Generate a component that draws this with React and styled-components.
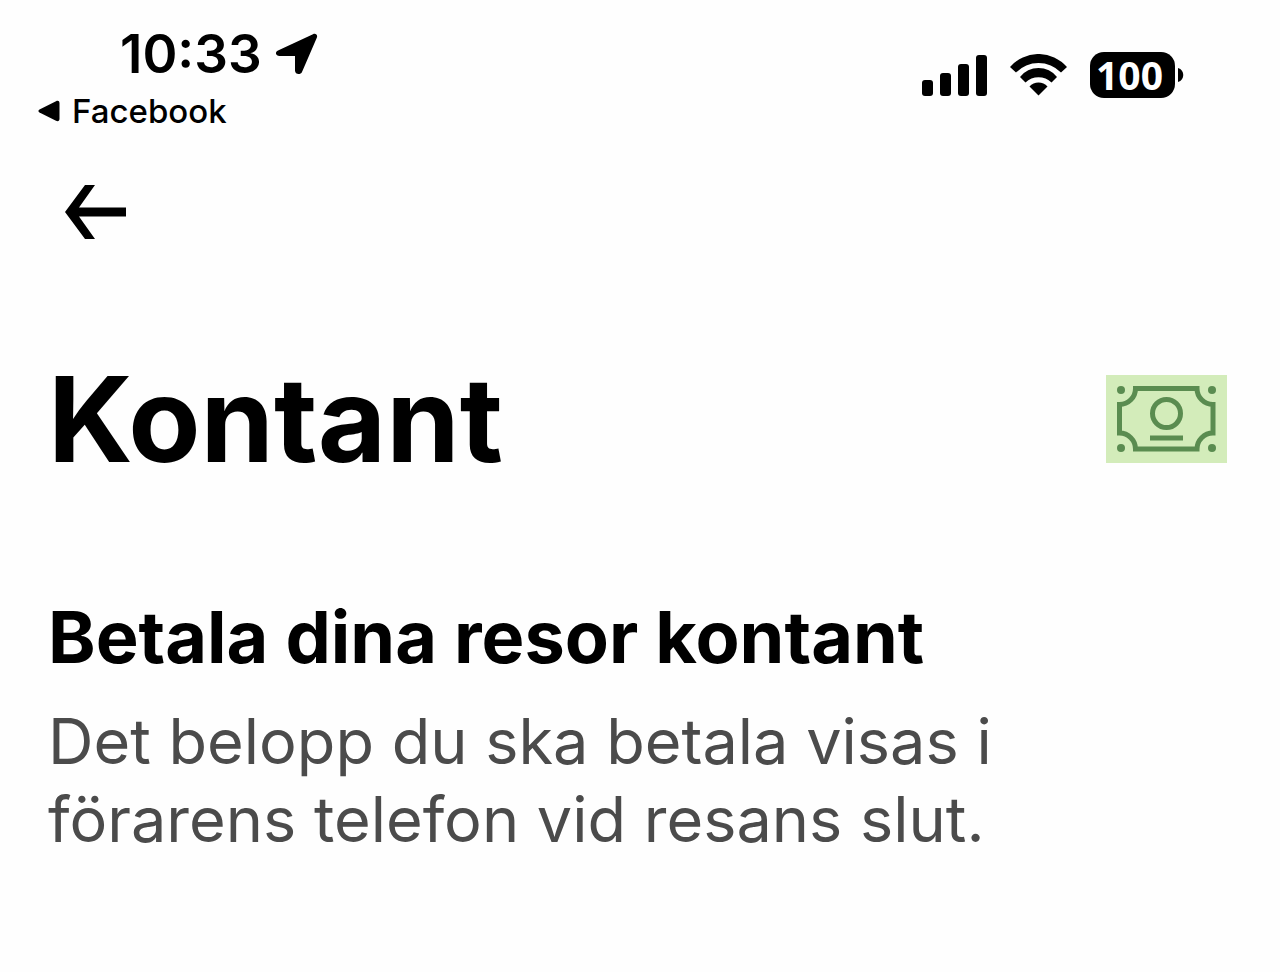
import React from "react";
import styled, { createGlobalStyle } from "styled-components";

const GlobalStyle = createGlobalStyle`
    * {
        box-sizing: border-box;
    }
    body {
        margin: 0;
        background-color: #fefefe;
        color: #000;
        font-family: Inter, sans-serif;
    }
`
const Screen = styled.div`
    padding: 28px 53px 120px 48px;
`
const StatusBar = styled.header`
    display: flex;
    justify-content: space-between;
    align-items: flex-start;
    margin: 0 -16px 0 -10px;
`
const Clock = styled.div`
    display: flex;
    align-items: center;
    gap: 14px;
    padding-left: 82px;
    font-size: 53px;
    font-weight: 600;
    line-height: 52px;
`
const BackToApp = styled.a`
    display: flex;
    align-items: center;
    gap: 12px;
    margin-top: 11px;
    color: inherit;
    font-size: 33px;
    font-weight: 500;
    line-height: 40px;
    text-decoration: none;
`
const Indicators = styled.div`
    display: flex;
    align-items: center;
    gap: 22px;
    padding: 24px 59px 0 0;
`
const Battery = styled.div`
    display: flex;
    align-items: center;
    gap: 3px;
`
const BatteryLevel = styled.span`
    width: 85px;
    border-radius: 14px;
    background-color: #000;
    color: #fff;
    font-family: "Open Sans", sans-serif;
    font-size: 39px;
    font-weight: 700;
    line-height: 46px;
    text-align: center;
    padding-right: 6px;
`
const BackButton = styled.button`
    display: block;
    margin: 54px 0 0;
    padding: 0 17px;
    border: 0;
    background: none;
    cursor: pointer;
`
const Icon = styled.svg`
    display: block;
    flex: none;
`
const TitleRow = styled.div`
    display: flex;
    justify-content: space-between;
    align-items: center;
    margin-top: 108px;
`
const Title = styled.h1`
    margin: 0;
    font-size: 118px;
    font-weight: 700;
    line-height: 144px;
`
const Subtitle = styled.h2`
    margin: 98px 0 0;
    font-size: 72px;
    font-weight: 700;
    line-height: 96px;
`
const Description = styled.p`
    max-width: 1000px;
    margin: 17px 0 0;
    color: #4b4b4b;
    font-size: 63px;
    line-height: 78px;
`

const LocationIcon = () => (
    <Icon width="42" height="42" viewBox="0 0 42 42" aria-hidden="true">
        <path d="M2 17.5 37 1.2c2.700-1.200 5 .8 3.800 3.500L26 39c-1.500 3.300-7 2.600-7-1.500V23H3.500c-4 0-4.800-4-1.500-5.500Z" />
    </Icon>
)

const CaretIcon = () => (
    <Icon width="22" height="22" viewBox="0 0 22 22" aria-hidden="true">
        <path d="M1.500 9.500 18 1.200c2-1 3.500-.2 3.500 2v15.600c0 2.200-1.500 3-3.500 2L1.500 12.500c-1.500-.8-1.500-2.200 0-3Z" />
    </Icon>
)

const SignalIcon = () => (
    <Icon width="66" height="42" viewBox="0 0 66 42" role="img" aria-label="Signal">
        <rect x="0" y="26" width="11" height="16" rx="3" />
        <rect x="18" y="19" width="11" height="23" rx="3" />
        <rect x="36" y="10" width="11" height="32" rx="3" />
        <rect x="54" y="1" width="11" height="41" rx="3" />
    </Icon>
)

const WifiIcon = () => (
    <Icon width="58" height="42" viewBox="0 0 58 42" role="img" aria-label="Wifi">
        <path d="M0 13A37.700 37.700 0 0 1 57 13L51 18.500A31.400 31.400 0 0 0 6 18.500Z" />
        <path d="M10 23A23.500 23.500 0 0 1 47 23L41.500 28.500A18.700 18.700 0 0 0 15.500 28.500Z" />
        <path d="M19.500 32.500A12 12 0 0 1 37.500 32.500L28.500 41.500Z" />
    </Icon>
)

const BatteryTip = () => (
    <Icon width="6" height="14" viewBox="0 0 6 14" aria-hidden="true">
        <path d="M0 0c7 2 7 12 0 14Z" />
    </Icon>
)

const ArrowIcon = () => (
    <Icon width="61" height="54" viewBox="0 0 61 54" aria-hidden="true">
        <path d="M20 0H30L14 22.500H61V31.500H14L30 54H20L0 27Z" />
    </Icon>
)

const CashIcon = () => (
    <Icon width="121" height="88" viewBox="0 0 121 88" role="img" aria-label="Kontant">
        <rect width="121" height="88" fill="#d3ecba" />
        <g fill="none" stroke="#5a8c50" strokeWidth="5">
            <path d="M29.500 13.500H91A16 16 0 0 0 107 29.500V58A16 16 0 0 0 91 74H29.500A16 16 0 0 0 13.500 58V29.500A16 16 0 0 0 29.500 13.500Z" />
            <circle cx="60.500" cy="38.500" r="14" />
            <path d="M44 63H77" />
        </g>
        <g fill="#5a8c50">
            <circle cx="15" cy="15" r="4" />
            <circle cx="106" cy="15" r="4" />
            <circle cx="15" cy="73" r="4" />
            <circle cx="106" cy="73" r="4" />
        </g>
    </Icon>
)

export default function App() {
    return (
        <>
            <GlobalStyle />
            <Screen>
                <StatusBar>
                    <div>
                        <Clock>
                            <span>10:33</span>
                            <LocationIcon />
                        </Clock>
                        <BackToApp href="#">
                            <CaretIcon />
                            Facebook
                        </BackToApp>
                    </div>
                    <Indicators>
                        <SignalIcon />
                        <WifiIcon />
                        <Battery>
                            <BatteryLevel>100</BatteryLevel>
                            <BatteryTip />
                        </Battery>
                    </Indicators>
                </StatusBar>
                <BackButton type="button" aria-label="Tillbaka">
                    <ArrowIcon />
                </BackButton>
                <main>
                    <TitleRow>
                        <Title>Kontant</Title>
                        <CashIcon />
                    </TitleRow>
                    <Subtitle>Betala dina resor kontant</Subtitle>
                    <Description>Det belopp du ska betala visas i förarens telefon vid resans slut.</Description>
                </main>
            </Screen>
        </>
    );
}
